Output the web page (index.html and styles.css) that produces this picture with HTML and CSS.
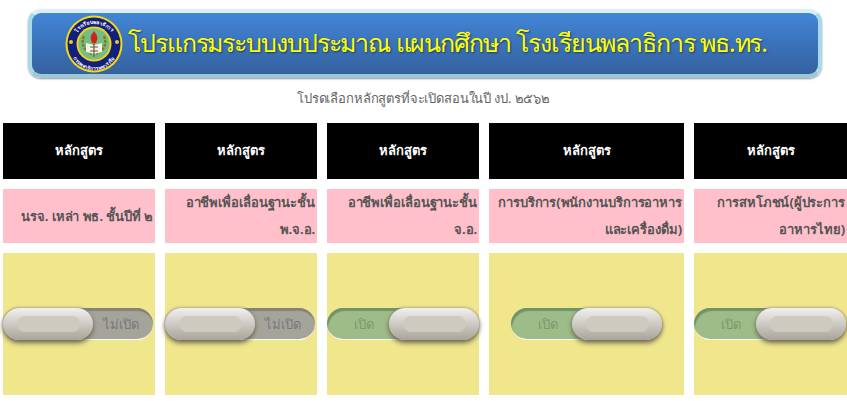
FILE: index.html
```html
<!DOCTYPE html>
<html lang="th">
<head>
  <meta charset="UTF-8">
  <meta name="viewport" content="width=device-width, initial-scale=1.0">
  <title>โปรแกรมระบบงบประมาณ</title>
  <link rel="stylesheet" href="styles.css">
</head>
<body>
  <div class="banner">
    <svg class="logo" width="58" height="58" viewBox="0 0 58 58">
      <defs>
        <path id="arcTop" d="M7 31a22 22 0 0 1 44 0"/>
        <path id="arcBottom" d="M4 33a25.200 25.200 0 0 0 50 0"/>
      </defs>
      <circle cx="29" cy="29" r="28.500" fill="#f4d90f"/>
      <circle cx="29" cy="29" r="26.500" fill="#12207c"/>
      <circle cx="29" cy="29" r="17.500" fill="#f0d21c"/>
      <circle cx="29" cy="29" r="15.500" fill="#74bd84"/>
      <text class="logo-text"><textPath href="#arcTop" startOffset="50%" text-anchor="middle">โรงเรียนพลาธิการ</textPath></text>
      <text class="logo-text"><textPath href="#arcBottom" startOffset="50%" text-anchor="middle">กรมพลาธิการทหารเรือ</textPath></text>
      <circle cx="6" cy="27" r="2" fill="#e9c92e"/>
      <circle cx="52" cy="27" r="2" fill="#e9c92e"/>
      <path d="M19 21c-3 7-1 14 8 18M39 21c3 7 1 14-8 18" fill="none" stroke="#8a7a1d" stroke-width="2.500" stroke-dasharray="3 1"/>
      <path d="M21 28l8 2 8-2v9l-8 2-8-2z" fill="#f3f3ee"/>
      <path d="M29 16c3 4 4 6 3 9l-1 3h-4l-1-3c-1-3 0-5 3-9z" fill="#d2231c"/>
      <path d="M29 27v15M25 32h8M25 36h8" stroke="#6b5a20" stroke-width="1.200" fill="none"/>
    </svg>
    <h1 class="banner-title">โปรแกรมระบบงบประมาณ แผนกศึกษา โรงเรียนพลาธิการ พธ.ทร.</h1>
  </div>

  <p class="subtitle">โปรดเลือกหลักสูตรที่จะเปิดสอนในปี งป. ๒๕๖๒</p>

  <div class="course-grid">
    <div class="head-cell">หลักสูตร</div>
    <div class="head-cell">หลักสูตร</div>
    <div class="head-cell">หลักสูตร</div>
    <div class="head-cell">หลักสูตร</div>
    <div class="head-cell">หลักสูตร</div>

    <div class="name-cell">นรจ. เหล่า พธ. ชั้นปีที่ ๒</div>
    <div class="name-cell">อาชีพเพื่อเลื่อนฐานะชั้น<br>พ.จ.อ.</div>
    <div class="name-cell">อาชีพเพื่อเลื่อนฐานะชั้น<br>จ.อ.</div>
    <div class="name-cell">การบริการ(พนักงานบริการอาหาร<br>และเครื่องดื่ม)</div>
    <div class="name-cell">การสหโภชน์(ผู้ประการ<br>อาหารไทย)</div>

    <div class="switch-cell"><div class="switch off"><span class="switch-label">ไม่เปิด</span><span class="knob"></span></div></div>
    <div class="switch-cell"><div class="switch off"><span class="switch-label">ไม่เปิด</span><span class="knob"></span></div></div>
    <div class="switch-cell"><div class="switch on"><span class="switch-label">เปิด</span><span class="knob"></span></div></div>
    <div class="switch-cell wide"><div class="switch on"><span class="switch-label">เปิด</span><span class="knob"></span></div></div>
    <div class="switch-cell"><div class="switch on"><span class="switch-label">เปิด</span><span class="knob"></span></div></div>
  </div>
</body>
</html>
```

FILE: styles.css
```css
html, body {
  overflow: hidden;
}
body {
  margin: 0;
  height: 401px;
  font-family: "Noto Sans", "DejaVu Sans", sans-serif;
  background: #fff;
}
.banner {
  box-sizing: border-box;
  width: 794px;
  height: 69px;
  margin: 9px 0 0 28px;
  padding-left: 33px;
  display: flex;
  align-items: center;
  gap: 5px;
  border: 4px solid #a9d8e8;
  border-top-color: #d8f0f6;
  border-bottom-color: #9cc8d6;
  border-radius: 13px;
  background: linear-gradient(#4285d6, #34619f);
  box-shadow: 0 1px 2px #8a9a9f;
}
.logo {
  flex: none;
}
.logo-text {
  font-size: 5px;
  font-weight: 700;
  fill: #fff;
}
.banner-title {
  margin: 0 0 2px;
  font-size: 25px;
  font-weight: 400;
  letter-spacing: -1.1px;
  white-space: nowrap;
  color: #ffff00;
  text-shadow: 1px 1px 2px #1c3b66;
}
.subtitle {
  margin: 10px 0 0;
  height: 25px;
  line-height: 20px;
  font-size: 13px;
  letter-spacing: -0.15px;
  text-align: center;
  color: #666;
}
.course-grid {
  display: grid;
  grid-template-columns: 152px 152px 152px 195px 153px;
  grid-template-rows: 56px 54px 142px;
  gap: 10px;
  margin: 10px 0 0 3px;
}
.head-cell {
  display: flex;
  align-items: center;
  justify-content: center;
  padding-bottom: 2px;
  background: #000;
  color: #fff;
  font-size: 13px;
  font-weight: 700;
}
.name-cell {
  padding: 0 2px;
  display: flex;
  flex-direction: column;
  align-items: flex-end;
  justify-content: center;
  background: #ffc0cb;
  color: #555;
  font-size: 13px;
  font-weight: 700;
  letter-spacing: -0.1px;
  line-height: 27px;
  text-align: right;
  white-space: nowrap;
}
.switch-cell {
  display: flex;
  align-items: center;
  padding-bottom: 1px;
  background: #f0e68c;
}
.switch-cell.wide {
  padding-left: 22px;
}
.switch {
  position: relative;
  box-sizing: border-box;
  width: 150px;
  height: 32px;
  border-radius: 16px;
  border-bottom: 1px solid #fff;
  font-size: 13px;
}
.switch.off {
  background: #a5a49a;
  box-shadow: inset 0 4px 1px -1px #838379;
  color: #78777a;
}
.switch.on {
  background: #9dbc87;
  box-shadow: inset 2px 4px 1px -1px #72936a;
  color: #78986c;
}
.switch-label {
  position: absolute;
  top: 6px;
}
.off .switch-label {
  right: 14px;
}
.on .switch-label {
  left: 27px;
}
/* knob sits over the track */
.knob {
  position: absolute;
  top: 0;
  width: 90px;
  height: 32px;
  border-radius: 16px;
  background: linear-gradient(#f2f0f0, #a9a498);
  box-shadow: 0 3px 5px #6d6a55, 0 0 3px #8a8a80;
}
.off .knob {
  left: 0;
}
.on .knob {
  right: -2px;
}
.wide .knob {
  right: -1px;
}
.knob::after {
  content: "";
  position: absolute;
  left: 14px;
  top: 8px;
  width: 63px;
  height: 16px;
  border-radius: 8px;
  background: #cfcabf;
}
```
